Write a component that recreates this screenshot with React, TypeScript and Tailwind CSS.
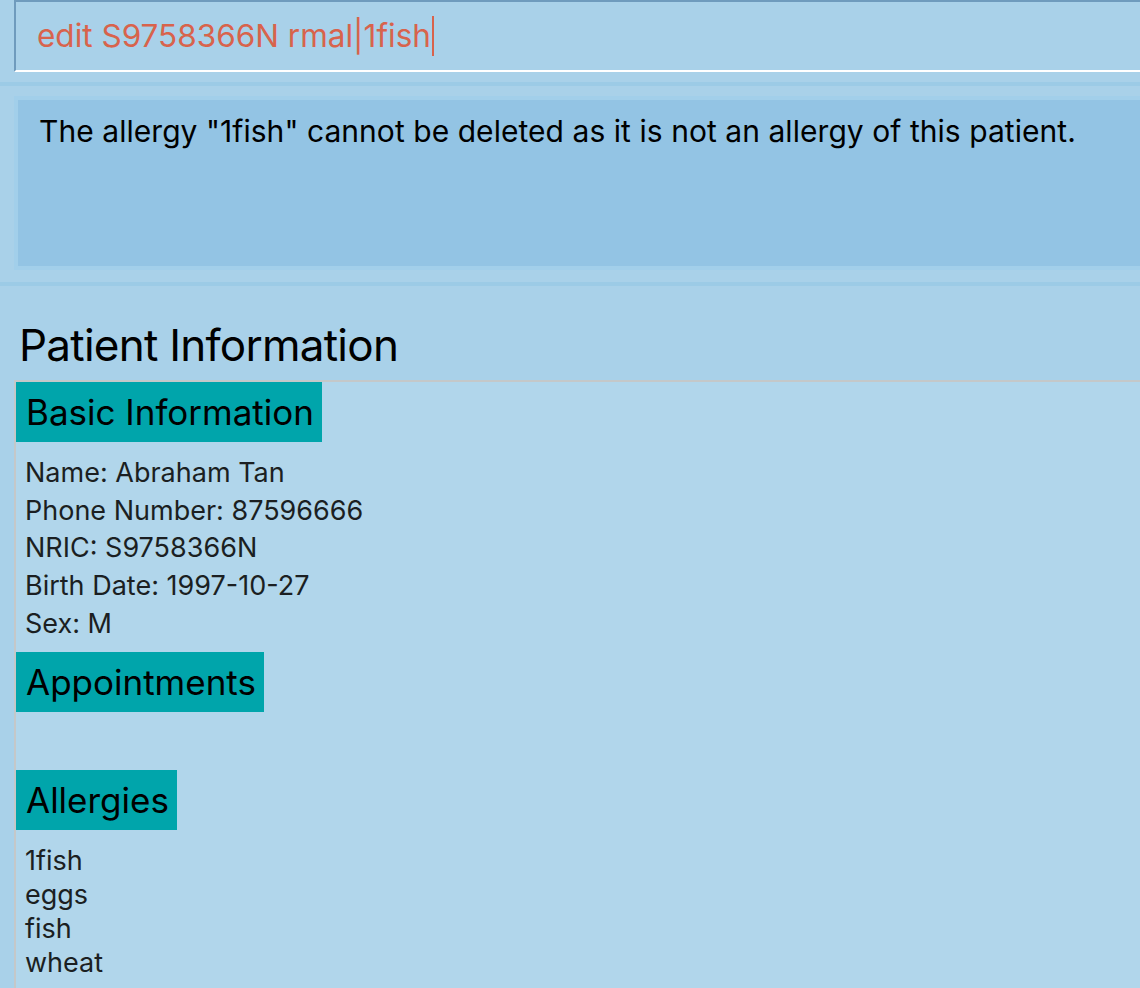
import React from "react";

export default function App() {
  const font = { fontFamily: "Inter, 'Noto Sans', sans-serif" };
  return (
    <div className="w-[1140px] h-[988px] overflow-hidden bg-[#a9d1e9]" style={font}>
      {/* command box */}
      <div className="pl-[14px]">
        <div className="h-[72px] border-t-2 border-l-2 border-[#6f9bbd] border-b-2 border-b-white flex items-center pl-[21px]">
          <span className="text-[31.5px] text-[#d8634c] leading-none">
            edit S9758366N rmal|1fish
          </span>
          <span className="w-[2px] h-[40px] bg-[#d8634c] ml-[1px]" />
        </div>
      </div>
      {/* separator */}
      <div className="h-[10px]" />
      <div className="h-[4px] bg-[#9ccbe6]" />
      <div className="h-[10px]" />
      {/* result box */}
      <div className="pl-[14px]">
        <div className="border-4 border-r-0 border-[#a2cfea] h-[174px] bg-[#93c4e4] pl-[21px] pt-[13px]">
          <div className="text-[30px] text-black leading-[36px] tracking-[0.05px]">
            The allergy "1fish" cannot be deleted as it is not an allergy of this patient.
          </div>
        </div>
      </div>
      <div className="h-[12px]" />
      <div className="h-[4px] bg-[#9ccbe6]" />
      {/* patient info */}
      <div className="pl-[19px] pt-[34px] pb-[10px]">
        <div className="text-[44px] leading-[50px] text-black tracking-[-0.75px]">Patient Information</div>
      </div>
      <div className="pl-[14px]">
        <div className="border-t-2 border-l-2 border-[#c4c8c9] bg-[#b1d6eb] h-[700px]">
          <Header title="Basic Information" />
          <div className="pl-[9px] pt-[12px] text-[27px] leading-[37.7px] text-[#1b1f22]">
            <div>Name: Abraham Tan</div>
            <div>Phone Number: 87596666</div>
            <div>NRIC: S9758366N</div>
            <div>Birth Date: 1997-10-27</div>
            <div>Sex: M</div>
          </div>
          <div className="h-[9px]" />
          <Header title="Appointments" />
          <div className="h-[58px]" />
          <Header title="Allergies" />
          <div className="pl-[9px] pt-[14px] text-[27px] leading-[34px] text-[#1b1f22]">
            <div>1fish</div>
            <div>eggs</div>
            <div>fish</div>
            <div>wheat</div>
          </div>
        </div>
      </div>
    </div>
  );
}

function Header({ title }: { title: string }) {
  return (
    <div className="inline-block bg-[#00a5ab] h-[60px] pl-[10px] pr-[8px] text-[35px] leading-[60px] text-black">
      {title}
    </div>
  );
}
